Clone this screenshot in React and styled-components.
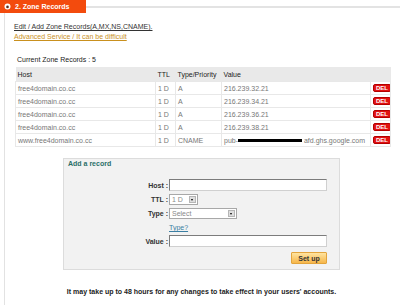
import React from "react";
import styled, { createGlobalStyle } from "styled-components";

const GlobalStyle = createGlobalStyle`
  html, body {
    margin: 0;
    padding: 0;
    background: #fff;
  }
  body {
    font-family: "Liberation Sans", Arial, sans-serif;
    font-size: 7px;
    color: #333;
  }
`;

const records = [
  { host: "free4domain.co.cc", ttl: "1 D", type: "A", value: "216.239.32.21" },
  { host: "free4domain.co.cc", ttl: "1 D", type: "A", value: "216.239.34.21" },
  { host: "free4domain.co.cc", ttl: "1 D", type: "A", value: "216.239.36.21" },
  { host: "free4domain.co.cc", ttl: "1 D", type: "A", value: "216.239.38.21" },
  { host: "www.free4domain.co.cc", ttl: "1 D", type: "CNAME", value: "pub-", hidden: true, tail: " afd.ghs.google.com" },
];

const App = () => {
  return (
    <Page>
      <GlobalStyle />
      <SectionHeader>
        <Tab>
          <svg width="7" height="7" viewBox="0 0 7 7">
            <circle cx="3.5" cy="3.5" r="3" fill="#fff" />
            <circle cx="3.5" cy="3.9" r="1.3" fill="#5a2a18" />
          </svg>
          2. Zone Records
        </Tab>
        <Rule />
      </SectionHeader>

      <Body>
        <TextLink href="#">Edit / Add Zone Records(A,MX,NS,CNAME).</TextLink>
        <TextLink href="#" $tone="gold">Advanced Service / It can be difficult</TextLink>

        <Caption>Current Zone Records : 5</Caption>
        <Records>
          <colgroup>
            <col style={{ width: 140 }} />
            <col style={{ width: 20 }} />
            <col style={{ width: 46 }} />
            <col style={{ width: 149 }} />
            <col style={{ width: 20 }} />
          </colgroup>
          <thead>
            <tr>
              <HeadCell>Host</HeadCell>
              <HeadCell>TTL</HeadCell>
              <HeadCell>Type/Priority</HeadCell>
              <HeadCell>Value</HeadCell>
              <HeadCell />
            </tr>
          </thead>
          <tbody>
            {records.map((r, i) => (
              <tr key={i}>
                <Cell>{r.host}</Cell>
                <Cell>{r.ttl}</Cell>
                <Cell>{r.type}</Cell>
                <Cell>
                  {r.value}
                  {r.hidden && <Redacted />}
                  {r.tail}
                </Cell>
                <Cell $end>
                  <DelBadge>DEL</DelBadge>
                </Cell>
              </tr>
            ))}
          </tbody>
        </Records>

        <AddBox>
          <BoxTitle>Add a record</BoxTitle>
          <FormGrid>
            <Label>Host :</Label>
            <TextInput />
            <Label>TTL :</Label>
            <FakeSelect $width={29}>
              <span>1 D</span>
              <DropButton />
            </FakeSelect>
            <Label>Type :</Label>
            <FakeSelect $width={68}>
              <span>Select</span>
              <DropButton />
            </FakeSelect>
            <span />
            <HelpLink href="#">Type?</HelpLink>
            <Label>Value :</Label>
            <TextInput />
          </FormGrid>
          <ButtonRow>
            <SetupButton>Set up</SetupButton>
          </ButtonRow>
        </AddBox>

        <Note>It may take up to 48 hours for any changes to take effect in your users' accounts.</Note>
      </Body>
    </Page>
  );
};

const Page = styled.div`
  width: 400px;
  height: 305px;
  overflow: hidden;
  display: flex;
  flex-direction: column;
`;

const SectionHeader = styled.div`
  display: flex;
  height: 13px;
`;

const Tab = styled.div`
  width: 86px;
  display: flex;
  align-items: center;
  gap: 4px;
  padding-left: 4px;
  box-sizing: border-box;
  background: #f34b0d;
  color: #fff;
  font-weight: bold;
  font-size: 7px;
`;

const Rule = styled.div`
  flex: 1;
  height: 2px;
  margin-top: 6px;
  background: #e3e3e3;
`;

const Body = styled.div`
  flex: 1;
  margin-left: 4px;
  border-left: 1px solid #e2e2e2;
  padding: 9px 0 0 9px;
`;

const TextLink = styled.a`
  display: block;
  width: max-content;
  line-height: 10px;
  color: ${(p) => (p.$tone === "gold" ? "#c9901e" : "#333")};
  text-decoration: underline;
`;

const Caption = styled.div`
  margin-top: 13px;
  padding-left: 3px;
  line-height: 10px;
  color: #222;
`;

const Records = styled.table`
  margin: 2px 0 0 1px;
  width: 375px;
  table-layout: fixed;
  border-collapse: collapse;
`;

const HeadCell = styled.th`
  height: 14px;
  padding: 0 2px;
  background: #e9e9e9;
  text-align: left;
  font-weight: normal;
  color: #222;
`;

const Cell = styled.td`
  height: 12px;
  padding: 0 2px;
  border: 1px solid #e8e8e8;
  color: #777;
  white-space: nowrap;
  overflow: hidden;
  text-align: ${(p) => (p.$end ? "right" : "left")};
`;

const Redacted = styled.span`
  display: inline-block;
  width: 64px;
  height: 3px;
  background: #000;
  vertical-align: middle;
`;

const DelBadge = styled.span`
  display: inline-block;
  padding: 0 2px;
  line-height: 6px;
  font-size: 6px;
  font-weight: bold;
  color: #fff;
  background: #e11212;
  border: 1px solid #b40000;
  border-radius: 2px;
`;

const AddBox = styled.div`
  margin: 11px 0 0 49px;
  width: 277px;
  height: 112px;
  box-sizing: border-box;
  background: #f2f2f2;
  border: 1px solid #dcdcdc;
`;

const BoxTitle = styled.div`
  padding-left: 4px;
  line-height: 10px;
  font-weight: bold;
  color: #2b6e68;
`;

const FormGrid = styled.div`
  display: grid;
  grid-template-columns: 104px 158px;
  grid-template-rows: 14px 14px 15px 13px 14px;
  column-gap: 1px;
  align-items: center;
  margin-top: 9px;
`;

const Label = styled.span`
  text-align: right;
  font-weight: bold;
  color: #333;
`;

const TextInput = styled.input`
  width: 158px;
  height: 12px;
  box-sizing: border-box;
  padding: 0;
  background: #fff;
  border: 1px solid;
  border-color: #7c7c7c #d0d0d0 #d0d0d0 #7c7c7c;
`;

const FakeSelect = styled.div`
  width: ${(p) => p.$width}px;
  height: 11px;
  box-sizing: border-box;
  display: flex;
  align-items: center;
  justify-content: space-between;
  padding: 0 1px 0 2px;
  background: #fff;
  border: 1px solid #a8a8a8;
  color: #8a8a8a;
`;

const DropButton = styled.span`
  width: 7px;
  height: 7px;
  box-sizing: border-box;
  background: #dedede;
  border: 1px solid #b5b5b5;
  position: relative;

  &::after {
    content: "";
    position: absolute;
    left: 1px;
    top: 2px;
    border-left: 1.5px solid transparent;
    border-right: 1.5px solid transparent;
    border-top: 2px solid #000;
  }
`;

const HelpLink = styled.a`
  color: #3b7fa3;
  text-decoration: underline;
`;

const ButtonRow = styled.div`
  display: flex;
  justify-content: flex-end;
  width: 263px;
  margin-top: 4px;
`;

const SetupButton = styled.button`
  width: 36px;
  height: 12px;
  padding: 0;
  font-family: inherit;
  font-size: 7px;
  font-weight: bold;
  color: #333;
  background: linear-gradient(#ffe4a0, #f6b64a);
  border: 1px solid #e2a43c;
  border-radius: 1px;
`;

const Note = styled.div`
  margin: 17px 0 0 49px;
  width: 277px;
  text-align: center;
  white-space: nowrap;
  line-height: 10px;
  font-weight: bold;
  color: #222;
`;

export default App;
